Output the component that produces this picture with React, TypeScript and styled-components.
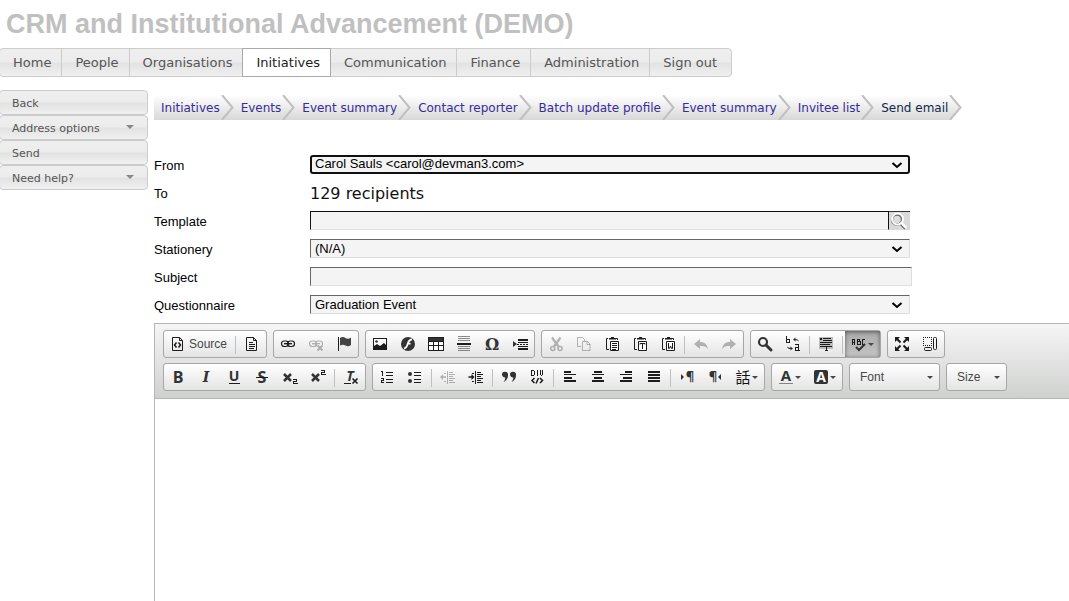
import React from "react";
import styled, { createGlobalStyle, css } from "styled-components";

const GlobalStyle = createGlobalStyle`
  *, *::before, *::after { box-sizing: border-box; }
  html, body { margin: 0; padding: 0; background: #fff; }
  body { overflow-x: hidden; font-family: "Liberation Sans", Arial, sans-serif; }
`;

const verdana = `Verdana, "DejaVu Sans", sans-serif`;
const arial = `"Liberation Sans", Arial, sans-serif`;

const Page = styled.div`
  min-height: 100vh;
  display: flex;
  flex-direction: column;
`;

const Title = styled.h1`
  margin: 0;
  padding: 8px 6px;
  height: 48px;
  font: bold 27px/32px ${arial};
  color: #c0c0c0;
  white-space: nowrap;
`;

const greyBar = css`
  background: linear-gradient(#efefef 0%, #ececec 49%, #e2e2e2 51%, #f0f0f0 100%);
`;

const MainNav = styled.nav`
  display: flex;
  align-self: flex-start;
  height: 29px;
  margin-left: -1px;
  border: 1px solid #ccc;
  border-radius: 4px;
  ${greyBar}
`;

const NavLink = styled.a<{ $active?: boolean }>`
  padding: 0 10px 0 13px;
  border-right: 1px solid #ccc;
  font: 13px/27px ${verdana};
  color: #555;
  text-decoration: none;
  white-space: nowrap;
  &:last-child { padding-right: 14px; border-right: 0; }
  ${(p) =>
    p.$active &&
    css`
      margin: -1px 0 -1px -1px;
      border: 1px solid #aaa;
      background: #fff;
      color: #212121;
    `}
`;

const Columns = styled.div`
  flex: 1;
  display: flex;
  gap: 6px;
  padding-top: 13px;
`;

const SideMenu = styled.nav`
  flex: 0 0 149px;
  margin-left: -1px;
  display: flex;
  flex-direction: column;
`;

const SideButton = styled.button`
  display: flex;
  justify-content: space-between;
  align-items: center;
  height: 25px;
  padding: 3px 13px 0 12px;
  border: 1px solid #ccc;
  border-radius: 4px;
  ${greyBar}
  font: 11px/20px ${verdana};
  color: #555;
  text-align: left;
`;

const Caret = styled.span<{ $size: number }>`
  border: ${(p) => p.$size}px solid transparent;
  border-top-color: currentColor;
  border-bottom: 0;
`;

const SideCaret = styled(Caret)`
  color: #888;
  margin-bottom: 4px;
`;

const Main = styled.main`
  flex: 1;
  min-width: 0;
  display: flex;
  flex-direction: column;
  padding-top: 5px;
`;

const Crumbs = styled.nav`
  display: flex;
  height: 25px;
  margin-bottom: 31px;
`;

const Crumb = styled.div<{ $last?: boolean }>`
  display: flex;
  height: 25px;
  background: linear-gradient(#fff, #d8d8d8);
  font: 12px/26px ${verdana};
  white-space: nowrap;
  a { padding-left: 7px; text-decoration: none; color: ${(p) => (p.$last ? "#12284c" : "#362c9c")}; }
`;

const Arrow = styled.svg`
  display: block;
  flex: none;
`;

const Row = styled.div`
  display: grid;
  grid-template-columns: 156px minmax(0, 602px);
  height: 28px;
  padding-top: 4px;
  align-items: start;
`;

const labelText = css`
  font: 13px/21px ${arial};
  color: #000;
`;
const Label = styled.label`${labelText}`;
const LabelSpan = styled.span`${labelText}`;

const Recipients = styled.span`
  font: 16px/21px ${verdana};
  color: #111;
`;

const field = css`
  display: block;
  height: 19px;
  margin: 0;
  border: 1px solid;
  border-color: #666 #ddd #ddd #666;
  border-radius: 0;
  background: #f4f4f4;
  font: 13px/15px ${arial};
  color: #000;
`;

const SelectBox = styled.div`
  position: relative;
  max-width: 600px;
  svg { position: absolute; right: 7px; top: 7px; pointer-events: none; }
`;

const SelectField = styled.select<{ $focused?: boolean }>`
  ${field}
  appearance: none;
  width: 100%;
  padding: 0 20px 0 4px;
  ${(p) =>
    p.$focused &&
    css`
      padding: 0 20px 1px 3px;
      border: 2px solid #101010;
      border-radius: 3px;
      line-height: 14px;
    `}
`;

function Select({ id, value, focused }: { id: string; value: string; focused?: boolean }) {
  return (
    <SelectBox>
      <SelectField id={id} $focused={focused}>
        <option>{value}</option>
      </SelectField>
      <svg width="12" height="7" viewBox="0 0 12 7" aria-hidden="true">
        <path d="M1.500 1L6 5l4.500-4" fill="none" stroke="#000" strokeWidth="2" />
      </svg>
    </SelectBox>
  );
}

const Input = styled.input`
  ${field}
  width: 100%;
  padding: 1px 4px;
`;

const Lookup = styled.div`
  display: flex;
  max-width: 600px;
`;

const LookupInput = styled(Input)`
  flex: 1;
  min-width: 0;
  border-color: #111 #111 #ddd #111;
`;

const LookupButton = styled.button`
  width: 21px;
  height: 19px;
  padding: 0;
  border: 0;
  border-top: 1px solid #333;
  background: #d9d9d9;
  svg { display: block; }
`;

const Editor = styled.section`
  flex: 1;
  display: flex;
  flex-direction: column;
  margin-top: 4px;
  border: 1px solid #b6b6b6;
  border-width: 1px 0 0 1px;
`;

const Toolbar = styled.div`
  display: flex;
  flex-direction: column;
  gap: 5px;
  padding: 6px 8px 7px;
  border-bottom: 1px solid #b6b6b6;
  background: linear-gradient(#f5f5f5, #cfd1cf);
`;

const ToolRow = styled.div`
  display: flex;
  gap: 6px;
`;

const Group = styled.div`
  display: flex;
  flex: none;
  height: 28px;
  border: 1px solid #a6a6a6;
  border-radius: 3px;
  background: linear-gradient(#fff, #e4e4e4);
`;

const Tool = styled.button<{ $pressed?: boolean; $off?: boolean }>`
  display: flex;
  align-items: center;
  gap: 3px;
  height: 26px;
  padding: 0 6px;
  border: 0;
  background: ${(p) => (p.$pressed ? "linear-gradient(#aaa, #c4c4c4)" : "transparent")};
  box-shadow: ${(p) => (p.$pressed ? "inset 0 1px 4px rgba(0,0,0,.5)" : "none")};
  font: 12px/18px ${arial};
  color: #474747;
  svg { display: block; overflow: visible; color: #1c1c1c; opacity: ${(p) => (p.$off ? 0.3 : 1)}; }
`;

const ToolCaret = styled(Caret)`
  margin-left: -2px;
`;

const Separator = styled.span`
  width: 1px;
  height: 18px;
  margin: 5px 2px 0;
  background: #c0c0c0;
`;

const Combo = styled.button<{ $width: number }>`
  display: flex;
  align-items: center;
  justify-content: space-between;
  width: ${(p) => p.$width}px;
  padding: 0 6px 0 10px;
  border: 0;
  background: transparent;
  font: 12px/18px ${arial};
  color: #474747;
`;

const Body = styled.textarea`
  flex: 1;
  min-height: 200px;
  width: 100%;
  padding: 8px;
  border: 0;
  outline: 0;
  resize: none;
  background: #fff;
  font: 13px/20px ${arial};
`;

/* ---- toolbar icons, all on a 16 x 16 grid ---- */

const px = { shapeRendering: "crispEdges" as const };
const line = { fill: "none", stroke: "currentColor" };

function Glyph({ x = 8, y, size, bold, italic, serif, fill, children }: any) {
  return (
    <text
      x={x}
      y={y}
      textAnchor="middle"
      fontSize={size}
      fontWeight={bold ? 700 : 400}
      fontStyle={italic ? "italic" : "normal"}
      fontFamily={serif ? '"DejaVu Serif", serif' : '"Open Sans", "DejaVu Sans", "Noto Sans CJK TC", sans-serif'}
      fill={fill || "#333"}
    >
      {children}
    </text>
  );
}

const sheet = <path d="M2.5 1.5h7l3 3v10h-10z M9.5 1.5v3h3" {...line} />;
const clipboard = (
  <>
    <path d="M4 2.5H2.5v11H5 M12 2.5h1.5V4" {...line} />
    <path d="M5 3.5V2h2V1h3v1h2v1.5z" fill="currentColor" />
    <path d="M6.5 5.5h8v9h-8z" {...line} fill="#fff" />
  </>
);
const chain = (
  <>
    <rect x="1.5" y="5" width="7" height="5.500" rx="2.700" {...line} strokeWidth="1.200" />
    <rect x="7.500" y="5" width="7" height="5.500" rx="2.700" {...line} strokeWidth="1.200" />
    <path d="M4 7.700h8" {...line} strokeWidth="1.400" />
  </>
);
const bars = (rows: number[][]) => (
  <g {...px} fill="currentColor">
    {rows.map(([x, y, w, h = 1], i) => (
      <rect key={i} x={x} y={y} width={w} height={h} />
    ))}
  </g>
);
const indentLines = bars([
  [7, 2, 1, 13],
  [9, 3, 4], [9, 5, 6], [9, 7, 4], [9, 9, 6], [9, 11, 4], [9, 13, 6],
  [4, 4, 2], [4, 12, 2],
]);
const smallTwo = (y: number) => (
  <path d={`M11 ${y + 0.5}h3.500v2h-3v2h4`} {...line} {...px} />
);

const icons: Record<string, React.ReactNode> = {
  source: (
    <>
      {sheet}
      <path d="M6.500 6.500L4.500 9l2 2.500 M8.500 6.500l2 2.500-2 2.500" {...line} strokeWidth="1.500" />
    </>
  ),
  templates: <>{sheet}{bars([[5, 6, 4], [5, 8, 6], [5, 10, 6], [5, 12, 5]])}</>,
  link: chain,
  unlink: (
    <>
      {chain}
      <path d="M9.500 9.500l5 5 M14.500 9.500l-5 5" stroke="#fff" strokeWidth="4" />
      <path d="M9.500 9.500l5 5 M14.500 9.500l-5 5" {...line} strokeWidth="2" />
    </>
  ),
  anchor: (
    <>
      <path d="M2.500 1v14" {...line} {...px} />
      <path d="M4 2c2-1.500 4-1 5.500 0s3.500 1 5.500-.5V9c-2 1.500-4 1.500-5.500.5S6 8.500 4 9.500z" fill="#444" />
    </>
  ),
  image: (
    <>
      <rect x="1.500" y="2.500" width="13" height="11" {...line} fill="#fff" />
      <path d="M2 12V10l3-2 3 2 4-3 2 2v4H2z" fill="currentColor" />
      <circle cx="4.500" cy="5.500" r="1.300" fill="#333" />
    </>
  ),
  flash: (
    <>
      <circle cx="8" cy="8" r="7" fill="#333" />
      <path d="M12 3.500c-3 0-3.500 2-4.200 4.200C7 10.500 6.300 12 4 12.500 M7 7.700h3.600" fill="none" stroke="#fff" strokeWidth="1.800" />
    </>
  ),
  table: (
    <g {...px}>
      <rect x="0.500" y="1.500" width="15" height="13" {...line} fill="#fff" />
      <path d="M1 2h14v3H1z" fill="#333" />
      <path d="M0 5.500h16 M0 9.500h16 M5.500 5v10 M10.500 5v10" {...line} />
    </g>
  ),
  rule: <>{bars([[1, 7, 14, 2]])}<g opacity=".5">{bars([[2, 0, 12], [2, 2, 12], [2, 4, 12], [2, 10, 12], [2, 12, 12], [2, 14, 12]])}</g></>,
  omega: <Glyph y={14} size={16} bold serif>Ω</Glyph>,
  pageBreak: <><path d="M1 5v6l4-3z" fill="#333" />{bars([[6, 3, 10, 2], [6, 6, 10], [5, 8, 2], [8, 8, 2], [11, 8, 2], [14, 8, 2], [6, 10, 10, 1], [6, 12, 10, 2]])}</>,
  cut: (
    <>
      <path d="M4 1.500l6.500 9 M12.500 1.500l-6.500 9" {...line} strokeWidth="2.200" />
      <circle cx="4.800" cy="12.500" r="2" {...line} strokeWidth="1.500" />
      <circle cx="12" cy="12.500" r="2" {...line} strokeWidth="1.500" />
    </>
  ),
  copy: <path d="M5 10.500H1.500v-9h5l2 2V5 M6.500 5.500h5l2.500 2.500v6.500H6.500z M11 5.500v3h3" {...line} />,
  paste: <>{clipboard}{bars([[8, 7, 5], [8, 9, 5], [8, 11, 5], [8, 13, 4]])}</>,
  pasteText: <>{clipboard}<path d="M8 8.500V7.500h5v1 M10.500 7.500V13" {...line} /></>,
  pasteWord: <>{clipboard}<path d="M8.500 7v5.500h1L10.500 10l1 2.500h1V7" {...line} /></>,
  undo: <path d="M1 8l6-5v3c5 0 7 2.500 8 7-2-2.500-4-3-8-3v3z" fill="currentColor" />,
  redo: <path d="M15 8L9 3v3c-5 0-7 2.500-8 7 2-2.500 4-3 8-3v3z" fill="currentColor" />,
  find: (
    <>
      <circle cx="6" cy="6" r="4" fill="none" stroke="#333" strokeWidth="2.200" />
      <path d="M9 9l5 5" stroke="#333" strokeWidth="3" strokeLinecap="round" />
    </>
  ),
  replace: (
    <>
      <path d="M1.500 0v7 M1 6.500h3.500v-3.500H1" {...line} {...px} />
      <path d="M10 8.500h3.500v6.500 M13.500 11.500h-3v3h4.500" {...line} {...px} />
      <path d="M8 3.500L10.500 1.500v1.400c2 0 3 .8 3.500 2.600-1-.9-2-1.200-3.500-1.200v1.200z M8 12.500L5.500 14.500v-1.400c-2 0-3-.8-3.500-2.600 1 .9 2 1.200 3.500 1.200v-1.200z" fill="#333" />
    </>
  ),
  selectAll: <><rect x="1" y="1" width="14" height="12" fill="#bbb" />{bars([[2, 2, 2, 2], [5, 2, 8], [5, 4, 9], [2, 6, 12], [2, 8, 10], [2, 10, 12], [8, 11, 1, 4], [7, 14, 3]])}</>,
  spell: (
    <>
      <g {...line} {...px}>
        <path d="M1.500 9V3.500h2V9 M1.500 6.500h2" />
        <path d="M6 3.500h2.500v2 M6 5.500h3v3H6 M6.500 3v6" />
        <path d="M14 3.500h-2.500v5h2.500" />
      </g>
      <path d="M5 11l3 3 6-6" {...line} stroke="#333" strokeWidth="2" />
    </>
  ),
  maximize: (
    <>
      <path d="M3 3l3.500 3.500 M13 3L9.500 6.500 M3 13l3.500-3.500 M13 13L9.500 9.500" {...line} strokeWidth="2" />
      <path d="M1 1h5L1 6z M15 1h-5l5 5z M1 15h5l-5-5z M15 15h-5l5-5z" fill="currentColor" />
    </>
  ),
  blocks: (
    <>
      <path d="M1 1.500h9 M1 9.500h9 M1.500 1v9 M9.500 1v9" {...line} {...px} strokeDasharray="1 1" />
      <rect x="11.500" y="1.500" width="3" height="12" rx="1" {...line} />
      <rect x="2.500" y="11.500" width="7" height="3" rx="1" {...line} />
    </>
  ),
  bold: <Glyph y={14} size={16} bold>B</Glyph>,
  italic: <Glyph y={13} size={14} bold italic serif>I</Glyph>,
  underline: <><Glyph y={12} size={14} bold>U</Glyph>{bars([[3, 14, 11]])}</>,
  strike: <><Glyph y={14} size={16} bold>S</Glyph>{bars([[2, 8, 12]])}</>,
  sub: <><path d="M2 5l7 7 M9 5l-7 7" stroke="#333" strokeWidth="2.500" />{smallTwo(10)}</>,
  sup: <><path d="M2 5l7 7 M9 5l-7 7" stroke="#333" strokeWidth="2.500" />{smallTwo(1)}</>,
  clear: (
    <>
      <Glyph x={7} y={12} size={14} bold italic>T</Glyph>
      {bars([[1, 14, 7]])}
      <path d="M9.500 9.500l5 5 M14.500 9.500l-5 5" {...line} strokeWidth="1.600" />
    </>
  ),
  numbered: (
    <>
      <path d="M2 2.500h1.500V7 M2 9.500h2.500v2h-2v2H5" {...line} {...px} />
      {bars([[7, 3, 7], [7, 6, 7], [7, 10, 7], [7, 13, 7]])}
    </>
  ),
  bulleted: <><circle cx="3" cy="5" r="2" fill="#333" /><circle cx="3" cy="12" r="2" fill="#333" />{bars([[7, 3, 7], [7, 6, 7], [7, 10, 7], [7, 13, 7]])}</>,
  outdent: <>{indentLines}<path d="M0 8l3-3v2.300h3v1.400H3V11z" fill="currentColor" /></>,
  indent: <>{indentLines}<path d="M6.500 8l-3-3v2.300h-3v1.400h3V11z" fill="currentColor" /></>,
  quote: (
    <g fill="#333">
      <path d="M1 5.500a3 2.700 0 0 1 6-.2C7.300 9 5.500 12 2.500 13c1.200-1.600 1.800-3 1.700-4.600C2.400 8.500 1 7.300 1 5.500z" />
      <path d="M9 5.500a3 2.700 0 0 1 6-.2c.3 3.700-1.500 6.700-4.500 7.700 1.200-1.600 1.800-3 1.700-4.600C10.400 8.500 9 7.300 9 5.500z" />
    </g>
  ),
  div: (
    <>
      <path d="M2 1.500h3 M2.500 1v5.500H5 M5.500 2v4 M8.500 1v6 M11.500 1v5 M13.500 1v5 M12 6.500h1" {...line} {...px} />
      <path d="M5.500 9L3 11.500l2.500 2.500 M11 9l2.500 2.500-2.500 2.500 M9.500 9l-2.500 5.500" {...line} strokeWidth="1.500" />
    </>
  ),
  left: bars([[2, 2, 7, 2], [2, 5, 12, 1], [2, 8, 8, 2], [2, 11, 12, 2]]),
  center: bars([[4, 2, 8, 2], [2, 5, 12, 1], [4, 8, 8, 2], [2, 11, 12, 2]]),
  right: bars([[7, 2, 7, 2], [2, 5, 12, 1], [5, 8, 9, 2], [2, 11, 12, 2]]),
  justify: bars([[2, 2, 12, 2], [2, 5, 12, 2], [2, 8, 12, 2], [2, 11, 12, 2]]),
  ltr: <><path d="M2 5v6l3-3z" fill="#333" /><Glyph x={11} y={12} size={13} bold>¶</Glyph></>,
  rtl: <><path d="M14 5v6l-3-3z" fill="#333" /><Glyph x={6} y={12} size={13} bold>¶</Glyph></>,
  language: <Glyph y={14} size={15} fill="#111">話</Glyph>,
  textColor: <><Glyph y={12} size={15} bold>A</Glyph><g opacity=".5">{bars([[1, 14, 14]])}</g></>,
  bgColor: <><rect x="1" y="1" width="14" height="14" rx="2" fill="#333" /><Glyph y={13} size={14} bold fill="#fff">A</Glyph></>,
};

type ToolSpec = { icon: string; label: string; off?: boolean; text?: string; caret?: boolean; pressed?: boolean };
const t = (icon: string, label: string, rest: Partial<ToolSpec> = {}): ToolSpec => ({ icon, label, ...rest });
const SEP = null;

const topRow: (ToolSpec | null)[][] = [
  [t("source", "Source", { text: "Source" }), SEP, t("templates", "Templates")],
  [t("link", "Link"), t("unlink", "Unlink", { off: true }), t("anchor", "Anchor")],
  [t("image", "Image"), t("flash", "Flash"), t("table", "Table"), t("rule", "Insert horizontal line"), t("omega", "Insert special character"), t("pageBreak", "Insert page break")],
  [t("cut", "Cut", { off: true }), t("copy", "Copy", { off: true }), t("paste", "Paste"), t("pasteText", "Paste as plain text"), t("pasteWord", "Paste from Word"), SEP, t("undo", "Undo", { off: true }), t("redo", "Redo", { off: true })],
  [t("find", "Find"), t("replace", "Replace"), SEP, t("selectAll", "Select all"), SEP, t("spell", "Spell check as you type", { caret: true, pressed: true })],
  [t("maximize", "Maximize"), t("blocks", "Show blocks")],
];

const bottomRow: (ToolSpec | null)[][] = [
  [t("bold", "Bold"), t("italic", "Italic"), t("underline", "Underline"), t("strike", "Strikethrough"), t("sub", "Subscript"), t("sup", "Superscript"), SEP, t("clear", "Remove format")],
  [
    t("numbered", "Numbered list"), t("bulleted", "Bulleted list"), SEP,
    t("outdent", "Decrease indent", { off: true }), t("indent", "Increase indent"), SEP,
    t("quote", "Block quote"), t("div", "Create div container"), SEP,
    t("left", "Align left"), t("center", "Center"), t("right", "Align right"), t("justify", "Justify"), SEP,
    t("ltr", "Left to right"), t("rtl", "Right to left"), t("language", "Set language", { caret: true }),
  ],
  [t("textColor", "Text color", { caret: true }), t("bgColor", "Background color", { caret: true })],
];

function ToolGroup({ items }: { items: (ToolSpec | null)[] }) {
  return (
    <Group>
      {items.map((item, i) =>
        item === null ? (
          <Separator key={i} />
        ) : (
          <Tool key={i} type="button" aria-label={item.label} $off={item.off} $pressed={item.pressed}>
            <svg width="16" height="16" viewBox="0 0 16 16" aria-hidden="true">{icons[item.icon]}</svg>
            {item.text}
            {item.caret && <ToolCaret $size={3} />}
          </Tool>
        )
      )}
    </Group>
  );
}

function CrumbArrow() {
  return (
    <Arrow width="14" height="25" viewBox="0 0 14 25" aria-hidden="true">
      <defs>
        <linearGradient id="crumbFill" x1="0" y1="0" x2="0" y2="1">
          <stop offset="0" stopColor="#fff" />
          <stop offset="1" stopColor="#d8d8d8" />
        </linearGradient>
      </defs>
      <path d="M0 0h2l10 12.500L2 25H0z" fill="url(#crumbFill)" />
      <path d="M2 0l10.500 12.500L2 25" fill="none" stroke="#c0c0c0" strokeWidth="2" />
    </Arrow>
  );
}

const LastCrumb = styled(Crumb)`
  background: none;
  a { background: linear-gradient(#fff, #d8d8d8); }
`;

const navItems = ["Home", "People", "Organisations", "Initiatives", "Communication", "Finance", "Administration", "Sign out"];
const sideItems: [string, boolean][] = [["Back", false], ["Address options", true], ["Send", false], ["Need help?", true]];
const crumbs = ["Initiatives", "Events", "Event summary", "Contact reporter", "Batch update profile", "Event summary", "Invitee list"];

export default function App() {
  return (
    <Page>
      <GlobalStyle />
      <Title>CRM and Institutional Advancement (DEMO)</Title>
      <MainNav aria-label="Main">
        {navItems.map((n) => (
          <NavLink key={n} href="#" $active={n === "Initiatives"}>{n}</NavLink>
        ))}
      </MainNav>
      <Columns>
        <SideMenu aria-label="Page actions">
          {sideItems.map(([name, menu]) => (
            <SideButton key={name} type="button">
              {name}
              {menu && <SideCaret $size={4} />}
            </SideButton>
          ))}
        </SideMenu>
        <Main>
          <Crumbs aria-label="Breadcrumb">
            {crumbs.map((c, i) => (
              <Crumb key={i}>
                <a href="#">{c}</a>
                <CrumbArrow />
              </Crumb>
            ))}
            <LastCrumb $last>
              <a href="#" aria-current="page">Send email</a>
              <CrumbArrow />
            </LastCrumb>
          </Crumbs>

          <Row>
            <Label htmlFor="from">From</Label>
            <Select id="from" focused value="Carol Sauls <carol@devman3.com>" />
          </Row>
          <Row>
            <LabelSpan>To</LabelSpan>
            <Recipients>129 recipients</Recipients>
          </Row>
          <Row>
            <Label htmlFor="template">Template</Label>
            <Lookup>
              <LookupInput id="template" type="text" />
              <LookupButton type="button" aria-label="Find template">
                <svg width="20" height="18" viewBox="0 0 20 18" aria-hidden="true">
                  <path d="M11 11l5.500 5.500" stroke="#666" strokeWidth="3" />
                  <circle cx="8" cy="7.500" r="5" fill="#ddd" stroke="#666" strokeWidth="2.500" />
                  <path d="M12.500 11l5 5" stroke="#fff" strokeWidth="2.500" />
                  <circle cx="8.500" cy="7" r="5.500" fill="none" stroke="#fff" strokeWidth="2" />
                </svg>
              </LookupButton>
            </Lookup>
          </Row>
          <Row>
            <Label htmlFor="stationery">Stationery</Label>
            <Select id="stationery" value="(N/A)" />
          </Row>
          <Row>
            <Label htmlFor="subject">Subject</Label>
            <Input id="subject" type="text" />
          </Row>
          <Row>
            <Label htmlFor="questionnaire">Questionnaire</Label>
            <Select id="questionnaire" value="Graduation Event" />
          </Row>

          <Editor>
            <Toolbar role="toolbar" aria-label="Formatting">
              <ToolRow>
                {topRow.map((g, i) => <ToolGroup key={i} items={g} />)}
              </ToolRow>
              <ToolRow>
                {bottomRow.map((g, i) => <ToolGroup key={i} items={g} />)}
                <Group><Combo type="button" $width={89}>Font<Caret $size={3} /></Combo></Group>
                <Group><Combo type="button" $width={59}>Size<Caret $size={3} /></Combo></Group>
              </ToolRow>
            </Toolbar>
            <Body aria-label="Message" />
          </Editor>
        </Main>
      </Columns>
    </Page>
  );
}
